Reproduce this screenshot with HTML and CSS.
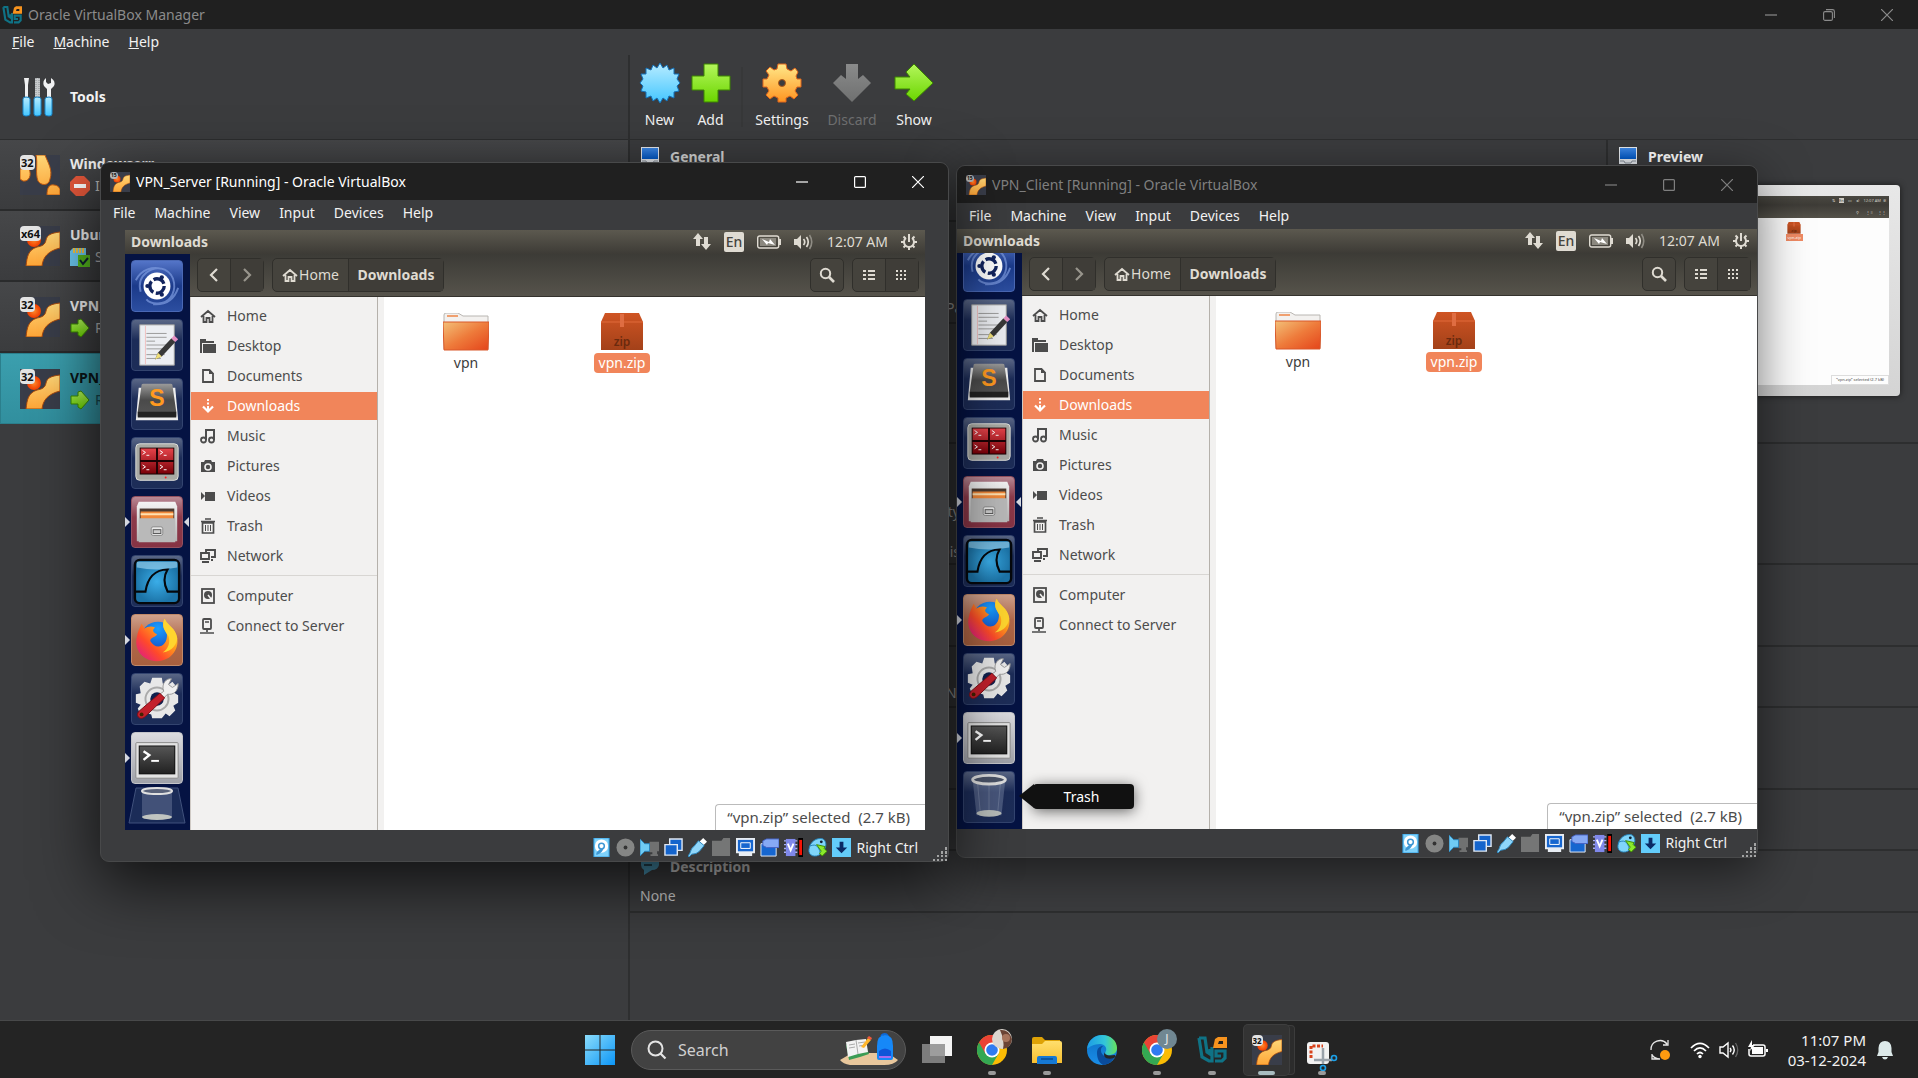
FILE: index.html
```html
<!DOCTYPE html>
<html lang="en">
<head>
<meta charset="utf-8">
<title>Oracle VirtualBox Manager</title>
<link rel="stylesheet" href="styles.css">
</head>
<body>
<svg class="defs" aria-hidden="true" width="0" height="0">
  <defs>
    <linearGradient id="gYellow" x1="0" y1="0" x2="0" y2="1"><stop offset="0" stop-color="#ffd778"/><stop offset="1" stop-color="#ffa637"/></linearGradient>
    <linearGradient id="gGreen" x1="0" y1="0" x2="0" y2="1"><stop offset="0" stop-color="#b4f65c"/><stop offset="1" stop-color="#6bd600"/></linearGradient>
    <linearGradient id="gBlue" x1="0" y1="0" x2="0" y2="1"><stop offset="0" stop-color="#b8ecff"/><stop offset="1" stop-color="#43c6ff"/></linearGradient>
    <linearGradient id="gOrange" x1="0" y1="0" x2="0" y2="1"><stop offset="0" stop-color="#ffe98a"/><stop offset="1" stop-color="#ff9420"/></linearGradient>
    <linearGradient id="gGrey" x1="0" y1="0" x2="0" y2="1"><stop offset="0" stop-color="#8a8b8b"/><stop offset="1" stop-color="#6f7070"/></linearGradient>
    <radialGradient id="gBall"><stop offset="0" stop-color="#ff8a2c"/><stop offset="1" stop-color="#f23c00"/></radialGradient>
    <linearGradient id="gScreen" x1="0" y1="0" x2="0" y2="1"><stop offset="0" stop-color="#3f8ae8"/><stop offset="1" stop-color="#0059c9"/></linearGradient>
    <linearGradient id="gFolder" x1="0" y1="0" x2="1" y2="1"><stop offset="0" stop-color="#f3c078"/><stop offset=".5" stop-color="#ee7b3b"/><stop offset="1" stop-color="#e4441a"/></linearGradient>
    <linearGradient id="gZip" x1="0" y1="0" x2="0" y2="1"><stop offset="0" stop-color="#cf5423"/><stop offset="1" stop-color="#a34119"/></linearGradient>
    <linearGradient id="gSilver" x1="0" y1="0" x2="0" y2="1"><stop offset="0" stop-color="#f4f4f4"/><stop offset="1" stop-color="#b4b4b4"/></linearGradient>
    <linearGradient id="gDark" x1="0" y1="0" x2="0" y2="1"><stop offset="0" stop-color="#9a9a9a"/><stop offset=".5" stop-color="#4a4a4a"/><stop offset="1" stop-color="#555"/></linearGradient>
    <linearGradient id="gTerm" x1="0" y1="0" x2="0" y2="1"><stop offset="0" stop-color="#555"/><stop offset="1" stop-color="#222"/></linearGradient>
    <radialGradient id="gShark"><stop offset="0" stop-color="#3aade8"/><stop offset="1" stop-color="#1c74a8"/></radialGradient>
    <linearGradient id="gFox" x1="1" y1="0" x2="0" y2="1"><stop offset="0" stop-color="#fff15a"/><stop offset=".35" stop-color="#ffa21a"/><stop offset=".65" stop-color="#ff4a2a"/><stop offset="1" stop-color="#d8109a"/></linearGradient>
    <radialGradient id="gGlobe" cx=".5" cy=".2" r=".9"><stop offset="0" stop-color="#19a0ff"/><stop offset=".5" stop-color="#1567d8"/><stop offset="1" stop-color="#4a1a8c"/></radialGradient>
    <linearGradient id="gRed" x1="0" y1="0" x2="0" y2="1"><stop offset="0" stop-color="#e4434a"/><stop offset="1" stop-color="#7a0008"/></linearGradient>
    <linearGradient id="gEdgeA" x1="0" y1="0" x2="1" y2="0"><stop offset="0" stop-color="#1c9be6"/><stop offset=".6" stop-color="#33c6d8"/><stop offset="1" stop-color="#67e35a"/></linearGradient>
    <linearGradient id="gEdgeB" x1="0" y1="0" x2="0" y2="1"><stop offset="0" stop-color="#0d6fc4"/><stop offset="1" stop-color="#1a8ee8"/></linearGradient>
    <linearGradient id="gWin" x1="0" y1="0" x2="1" y2="1"><stop offset="0" stop-color="#8bdcfb"/><stop offset="1" stop-color="#0c96f7"/></linearGradient>
    <linearGradient id="gYFolder" x1="0" y1="0" x2="0" y2="1"><stop offset="0" stop-color="#ffdf6d"/><stop offset="1" stop-color="#f8bf30"/></linearGradient>
  </defs>

  <symbol id="vm-art" viewBox="0 0 40 40">
    <rect width="40" height="40" fill="#393d49"/>
    <circle cx="14" cy="14" r="7" fill="url(#gBall)"/>
    <path d="M40 6C31 7 27 9 26 14C25 19 22 20 17 21C8 24 7 31 6 40H22C23 31 28 25 40 22Z" fill="url(#gYellow)" stroke="#a5480c" stroke-width="1"/>
  </symbol>
  <symbol id="vm-other" viewBox="0 0 40 40">
    <rect width="40" height="40" fill="#393d49"/>
    <path d="M16 0H25C28 8 33 15 30 24C29 31 21 31 18 26C15 18 18 8 16 0ZM0 14H9C12 20 9 27 3 26L0 24ZM27 40C27 33 29 29 34 30C37 30 39 32 40 34V40Z" fill="url(#gYellow)" stroke="#c05a10"/>
  </symbol>
  <symbol id="go-arrow" viewBox="0 0 20 20"><path d="M1 6H8V2L11 1L19 10L11 19L8 17V14H1Z" fill="url(#gGreen)" stroke="#3d8c00"/></symbol>
  <symbol id="vbox" viewBox="0 0 30 30">
    <path d="M2 3H8L10 17L13 19V14M2 3L5 22L12 26H15V12" fill="none" stroke="#0f7285" stroke-width="3.200"/>
    <path d="M18 26H25L28 23V16H19V21H24" fill="none" stroke="#0f7285" stroke-width="3.200"/>
    <path d="M16 13L18 4L21 2H30V13Z" fill="#f7931e"/><path d="M22 6H26V9H21Z" fill="#202020"/>
  </symbol>
  <symbol id="monitor" viewBox="0 0 20 20"><path d="M1 1H19V18H1Z" fill="#e9edf2"/><path d="M2 2H18V13H2Z" fill="url(#gScreen)"/><path d="M2 15H6L7 17H13L14 15H18" fill="none" stroke="#8a929c"/></symbol>
  <symbol id="win-min" viewBox="0 0 12 12"><path d="M0 6H12" stroke="currentColor" stroke-width="1.2"/></symbol>
  <symbol id="win-max" viewBox="0 0 12 12"><rect x=".6" y=".6" width="10.8" height="10.8" rx="1" fill="none" stroke="currentColor" stroke-width="1.2"/></symbol>
  <symbol id="win-restore" viewBox="0 0 12 12"><rect x=".6" y="2.6" width="8.8" height="8.8" rx="1.5" fill="none" stroke="currentColor" stroke-width="1.1"/><path d="M3 .6H9.5Q11.4 .6 11.4 2.5V9" fill="none" stroke="currentColor" stroke-width="1.1"/></symbol>
  <symbol id="win-close" viewBox="0 0 12 12"><path d="M0 0L12 12M12 0L0 12" stroke="currentColor" stroke-width="1.2"/></symbol>

  <!-- Ubuntu places icons -->
  <symbol id="p-home" viewBox="0 0 16 16"><path d="M1 9L8 3L15 9M3.500 8V14H6.500V10H9.500V14H12.500V8" fill="none" stroke="currentColor" stroke-width="1.800"/></symbol>
  <symbol id="p-desktop" viewBox="0 0 16 16"><path d="M0 1H6V3H14V5H2V15H0Z" fill="currentColor"/><path d="M3 6H16V15H3Z" fill="currentColor"/></symbol>
  <symbol id="p-doc" viewBox="0 0 16 16"><path d="M3 2H9.500L13 5.500V14H3Z" fill="none" stroke="currentColor" stroke-width="1.800"/><path d="M9 1V6H14" fill="currentColor"/></symbol>
  <symbol id="p-down" viewBox="0 0 16 16"><path d="M8 1V3M8 4.500V6.500M8 8V12" stroke="currentColor" stroke-width="2"/><path d="M3 8.500L8 13.500L13 8.500" fill="none" stroke="currentColor" stroke-width="2.200"/></symbol>
  <symbol id="p-music" viewBox="0 0 16 16"><path d="M6 12V2H14V12" fill="none" stroke="currentColor" stroke-width="2"/><circle cx="3.500" cy="12" r="2.500" fill="none" stroke="currentColor" stroke-width="1.800"/><circle cx="11.500" cy="12" r="2.500" fill="none" stroke="currentColor" stroke-width="1.800"/></symbol>
  <symbol id="p-pic" viewBox="0 0 16 16"><path d="M1 4H4L5 2H11L12 4H15V14H1Z" fill="currentColor"/><circle cx="8" cy="9" r="3" fill="none" stroke="#f2f1f0" stroke-width="1.600"/></symbol>
  <symbol id="p-video" viewBox="0 0 16 16"><path d="M5 4H15V13H5ZM1 4L5 8L1 12Z" fill="currentColor"/></symbol>
  <symbol id="p-trash" viewBox="0 0 16 16"><path d="M1 3.500H15M5 1H11M2.500 5H13.500V15H2.500Z" fill="none" stroke="currentColor" stroke-width="1.700"/><path d="M5.500 7V13M8 7V13M10.500 7V13" stroke="currentColor"/></symbol>
  <symbol id="p-net" viewBox="0 0 16 16"><path d="M6 4V2H15V9H11M1 5H9V11H1ZM2 14H9M11 12H13" fill="none" stroke="currentColor" stroke-width="1.900"/></symbol>
  <symbol id="p-comp" viewBox="0 0 16 16"><rect x="2" y="1" width="12" height="14" fill="none" stroke="currentColor" stroke-width="1.800"/><circle cx="8" cy="7" r="4" fill="currentColor"/><path d="M8 7L12 12" stroke="#f2f1f0" stroke-width="1.500"/></symbol>
  <symbol id="p-srv" viewBox="0 0 16 16"><rect x="3" y="1" width="8" height="10" rx="1" fill="none" stroke="currentColor" stroke-width="1.800"/><path d="M5 4H9M7 11V14M0 15H14" stroke="currentColor" stroke-width="1.700"/></symbol>

  <symbol id="i-net" viewBox="0 0 18 18"><path d="M5 0L10 6H7V13H3V6H0ZM13 17L8 11H11V4H15V11H18Z" fill="#dfdbd2"/></symbol>
  <symbol id="i-bat" viewBox="0 0 24 14"><rect x=".7" y="1" width="21" height="12" rx="2" fill="none" stroke="#dfdbd2" stroke-width="1.400"/><rect x="3" y="3" width="16" height="8" fill="#8b887f"/><path d="M22 4H24V10H22" fill="#dfdbd2"/><path d="M5 4L12 7L13 4L18 10L11 8L10 10Z" fill="#fff"/></symbol>
  <symbol id="i-snd" viewBox="0 0 20 16"><path d="M0 5H3L7 1V15L3 11H0Z" fill="#dfdbd2"/><path d="M9.500 5Q12 8 9.500 11M12.500 3Q16 8 12.500 13" fill="none" stroke="#dfdbd2" stroke-width="1.700"/><path d="M15.500 1Q20 8 15.500 15" fill="none" stroke="#908d85" stroke-width="1.600"/></symbol>
  <symbol id="i-gear" viewBox="0 0 16 16"><path d="M5 4A5 5 0 1 0 11 4M8 0V8" fill="none" stroke="#dfdbd2" stroke-width="2"/><path d="M0 8H3M13 8H16M2.500 2.500L4.500 4.500M13.500 2.500L11.500 4.500M2.500 13.500L4.500 11.500M13.500 13.500L11.500 11.500M8 13V16" stroke="#dfdbd2" stroke-width="2"/></symbol>
  <symbol id="t-prev" viewBox="0 0 12 14"><path d="M9 1L3 7L9 13" fill="none" stroke="currentColor" stroke-width="2.200"/></symbol>
  <symbol id="t-next" viewBox="0 0 12 14"><path d="M3 1L9 7L3 13" fill="none" stroke="currentColor" stroke-width="2.200"/></symbol>
  <symbol id="t-find" viewBox="0 0 16 16"><circle cx="6.500" cy="6.500" r="4.700" fill="none" stroke="currentColor" stroke-width="2"/><path d="M10 10L15 15" stroke="currentColor" stroke-width="2.600"/></symbol>
  <symbol id="t-list" viewBox="0 0 12 12"><path d="M0 2H3M0 6H3M0 10H3M5 2H12M5 6H12M5 10H12" stroke="currentColor" stroke-width="2"/></symbol>
  <symbol id="t-grid" viewBox="0 0 12 12"><path d="M0 2H12M0 6H12M0 10H12" stroke="currentColor" stroke-width="2" stroke-dasharray="2 2"/></symbol>

  <!-- Launcher tiles -->
  <symbol id="l-dash" viewBox="0 0 52 52"><path d="M9 32C4 14 22 4 34 9C46 15 46 30 40 38C34 46 20 46 15 40M4 20C10 8 22 6 30 8M22 45C36 46 44 40 48 28" fill="none" stroke="#7d9be0" stroke-width="2" opacity=".7"/><circle cx="26" cy="26" r="14" fill="#fff"/><circle cx="26" cy="26" r="7.500" fill="none" stroke="#12245e" stroke-width="3.500" stroke-dasharray="13 2.700"/><circle cx="16" cy="26" r="2.200" fill="#12245e"/><circle cx="31" cy="17" r="2.200" fill="#12245e"/><circle cx="31" cy="35" r="2.200" fill="#12245e"/></symbol>
  <symbol id="l-edit" viewBox="0 0 52 52"><path d="M8 5H44V47H8Z" fill="#eceef2" stroke="#999"/><path d="M14 6V46" stroke="#efc0c0"/><path d="M15 14H36M15 18H36M15 22H24M15 26H36M15 30H32M15 36H34M15 40H30" stroke="#9a9a9a"/><path d="M27 34L41 19L45 23L31 38L24 41Z" fill="#383838"/><path d="M27 34L31 38L24 41Z" fill="#f0e07a"/><path d="M41 19L44 16L48 20L45 23Z" fill="#e58fc4"/></symbol>
  <symbol id="l-subl" viewBox="0 0 52 52"><path d="M7 9H45L48 43H4Z" fill="#eee"/><path d="M10 6Q10 5 12 5H40Q42 5 42 6L46 34V39H6V34Z" fill="url(#gDark)"/><path d="M6 34H46V40H6Z" fill="#222"/><text x="26" y="28" text-anchor="middle" class="subl-mark">S</text></symbol>
  <symbol id="l-term4" viewBox="0 0 52 52"><rect x="4" y="6" width="44" height="38" rx="4" fill="#a9aaa4" stroke="#e0e0dc"/><rect x="8" y="10" width="36" height="28" fill="#1c0204"/><path d="M9 11H25V23H9ZM27 11H43V23H27ZM9 25H25V37H9ZM27 25H43V37H27Z" fill="url(#gRed)"/><path d="M11 13L14 15L11 17M15 18H18M29 13L32 15L29 17M33 18H36M11 28L14 30L11 32M15 33H18M29 28L32 30L29 32M33 33H36" fill="none" stroke="#fff"/><circle cx="35" cy="41" r="1" fill="#f22"/></symbol>
  <symbol id="l-files" viewBox="0 0 52 52"><path d="M7 5H45L47 10V46H5V10Z" fill="url(#gSilver)"/><rect x="8" y="12" width="36" height="12" fill="#4b3a30"/><path d="M9 15H43V23H9Z" fill="#f0883a"/><path d="M9 18H43" stroke="#ffe0b0" stroke-width="2"/><path d="M7 22H45V47H7Z" fill="#b9b9b9"/><rect x="20" y="31" width="12" height="9" rx="2" fill="#e8e8e8" stroke="#888"/><rect x="22" y="34" width="8" height="4" fill="#ccc" stroke="#555"/></symbol>
  <symbol id="l-shark" viewBox="0 0 52 52"><rect x="3" y="4" width="46" height="45" rx="5" fill="url(#gShark)" stroke="#05080c" stroke-width="2.500"/><path d="M5 6H47V12Q26 16 5 12Z" fill="#a5dcf6" opacity=".6"/><path d="M3 37H14C16 24 23 14 37 14C32 22 34 31 37 37H49" fill="none" stroke="#05080c" stroke-width="2.200"/></symbol>
  <symbol id="l-fox" viewBox="0 0 52 52"><circle cx="27" cy="25" r="18" fill="url(#gGlobe)"/><path d="M34 4C36 10 43 12 46 20C51 34 41 48 26 48C11 48 2 36 5 23C6 17 8 13 10 9L13 14C16 12 20 11 24 13C22 15 20 17 26 20C25 23 19 23 19 27C22 32 26 34 31 32C36 29 37 23 36 18C32 15 31 9 34 4Z" fill="url(#gFox)"/><path d="M34 4C31 10 33 16 38 22C40 28 38 35 32 39C42 38 47 30 47 24C45 13 36 11 34 4Z" fill="#ffd52e"/></symbol>
  <symbol id="l-sys" viewBox="0 0 52 52"><path d="M21 4H31L32 10L37 12L42 8L47 14L43 19L48 22V30L43 33L45 38L39 44L35 41L31 46H21L20 42L14 40L9 43L6 36L9 32L4 30V21L9 20L8 13L13 8L19 10Z" fill="#e8e8e8"/><circle cx="26" cy="26" r="12" fill="none" stroke="#aaa" stroke-width="2"/><circle cx="26" cy="26" r="7" fill="#10204e"/><path d="M33 18C30 10 36 4 41 5L38 11L42 14L48 10C48 18 43 22 37 21L33 25L29 21Z" fill="#f0f0f0" stroke="#999"/><path d="M29 20L34 25L14 44C9 49 3 44 7 39Z" fill="#c3202c" stroke="#7c0e16"/><circle cx="10" cy="42" r="2" fill="#420"/></symbol>
  <symbol id="l-term" viewBox="0 0 52 52"><rect x="4" y="10" width="44" height="37" rx="1" fill="#e3e3e3" stroke="#888"/><rect x="7" y="13" width="38" height="30" fill="#111"/><rect x="8" y="14" width="36" height="28" fill="url(#gTerm)"/><path d="M12 19L18 23L12 28" fill="none" stroke="#fff" stroke-width="2.500"/><path d="M20 29H28" stroke="#fff" stroke-width="2"/></symbol>
  <symbol id="l-trash" viewBox="0 0 52 52"><path d="M9 8H43L39 45H13Z" fill="#9aa6bf" opacity=".35"/><path d="M14 10L17 43M38 10L35 43M26 12V42" stroke="#a9b4c8" opacity=".3"/><ellipse cx="26" cy="43" rx="13" ry="3.500" fill="#b9bebb"/><ellipse cx="26" cy="8" rx="17" ry="4.500" fill="#4a5368" stroke="#dedede" stroke-width="3"/></symbol>
  <symbol id="l-fold" viewBox="0 0 58 38"><path d="M8 1H50L57 36H1Z" fill="#1b2c58" stroke="#40517c"/><path d="M14 5H44V30H14Z" fill="#8d99b4" opacity=".35"/><ellipse cx="29" cy="30" rx="15" ry="3" fill="#c0c4c0"/><ellipse cx="29" cy="4" rx="15" ry="3" fill="#59627a" stroke="#e0e0e0" stroke-width="2"/></symbol>

  <symbol id="f-folder" viewBox="0 0 46 38"><path d="M1 36V2Q1 0 3 0H15L20 3H45V36Z" fill="#f3f1ef" stroke="#b9b6b2"/><path d="M4 3H15" stroke="#f0a070" stroke-width="2"/><path d="M0 9H46L45 37H1Z" fill="url(#gFolder)" stroke="#d9582a"/></symbol>
  <symbol id="f-zip" viewBox="0 0 42 38"><path d="M4 0H38L42 9V37H0V9Z" fill="url(#gZip)"/><path d="M0 9H42" stroke="#e06a3a"/><path d="M19 1H23V14H19Z" fill="#df6d42"/><text x="21" y="33" text-anchor="middle" class="zip-mark">zip</text></symbol>

  <!-- Virtual machine status indicators -->
  <symbol id="s-hdd" viewBox="0 0 20 20"><path d="M2 0H18V20H2Z" fill="#7fd2fb" stroke="#2c9be0"/><circle cx="10" cy="8.500" r="7" fill="#fff"/><circle cx="10" cy="8.500" r="3" fill="none" stroke="#3f97d4" stroke-width="1.600"/><path d="M12 10Q12 15 5 18Q3 16 8 12" fill="#3f97d4"/></symbol>
  <symbol id="s-cd" viewBox="0 0 20 20"><circle cx="10" cy="10" r="9.500" fill="#858685"/><circle cx="10" cy="10" r="2" fill="#333"/></symbol>
  <symbol id="s-snd" viewBox="0 0 20 20"><path d="M10 4H20V14H18V17H19V19H11V17H13V15H10Z" fill="#707171"/><path d="M0 1L5 6H10V14H5L0 19Z" fill="#6fccf5" stroke="#2b86bd"/></symbol>
  <symbol id="s-net" viewBox="0 0 20 20"><path d="M6 1H19V13H6Z" fill="#1464cc" stroke="#dfe7f2" stroke-width="1.500"/><path d="M1 7H14V18H1Z" fill="#1464cc" stroke="#dfe7f2" stroke-width="1.500"/></symbol>
  <symbol id="s-usb" viewBox="0 0 20 20"><path d="M12 4L16 0L20 4L16 8Z" fill="#fff"/><path d="M7 8L11 3L17 8L12 14Q9 17 4 17L1 20L0 19L2 16Q3 11 7 8Z" fill="#8fd6fa" stroke="#2b86bd"/></symbol>
  <symbol id="s-dir" viewBox="0 0 20 20"><path d="M0 3H10L12 0H19V19H0Z" fill="#757676"/></symbol>
  <symbol id="s-disp" viewBox="0 0 20 20"><path d="M0 0H20V16H17V19H3V16H0Z" fill="#e8edf3"/><path d="M2 2H18V14H2Z" fill="#1666cf"/><path d="M5 5H15V11H5Z" fill="#1666cf" stroke="#fff"/></symbol>
  <symbol id="s-rec" viewBox="0 0 20 20"><path d="M1 6H17V19H1Z" fill="#1666cf" stroke="#e8edf3"/><path d="M7 1H20V10H7L3 8V3Z" fill="#86a9f4" stroke="#4762c4"/></symbol>
  <symbol id="s-cpu" viewBox="0 0 20 20"><path d="M0 3H14M0 7H14M0 11H14M0 15H14" stroke="#a9aff5" stroke-width="1.500"/><rect x="2" y="1" width="10" height="18" fill="#7f88ea"/><path d="M4 6L7 13L10 6" fill="none" stroke="#fff" stroke-width="2"/><rect x="15" y="0" width="5" height="20" fill="#000"/><rect x="16" y="2" width="3" height="16" fill="#f51405"/></symbol>
  <symbol id="s-mouse" viewBox="0 0 20 20"><path d="M1 12C2 4 9 -1 16 1C21 5 19 12 13 17C8 21 0 19 1 12Z" fill="#7fd5fa" stroke="#2583b8"/><path d="M1 9C7 6 11 7 13 16" fill="none" stroke="#2583b8"/><path d="M9 7L18 9L17 11L20 14L15 19L12 16L14 14Z" fill="#8bea2c" stroke="#3c8c00"/><circle cx="14" cy="4" r="1.500" fill="#123"/></symbol>
  <symbol id="s-key" viewBox="0 0 20 20"><rect width="20" height="20" fill="#63ccfa"/><path d="M8 4H12V10H16L10 16L4 10H8Z" fill="#0a2a66"/></symbol>
  <symbol id="s-grip" viewBox="0 0 14 14"><path d="M12 0H14V3H12ZM8 4H10V7H8ZM12 4H14V7H12ZM4 8H6V10H4ZM8 8H10V10H8ZM12 8H14V10H12ZM0 12H2V14H0ZM4 12H6V14H4ZM8 12H10V14H8ZM12 12H14V14H12Z" fill="#a3a4a4"/></symbol>

  <symbol id="chrome" viewBox="0 0 30 30"><circle cx="15" cy="15" r="15" fill="#fbbc04"/><path d="M2 7.500A15 15 0 0 0 15 30L21.500 18.700L15 15V7.500Z" fill="#34a853"/><path d="M2 7.500A15 15 0 0 1 28 7.500H15L8.500 18.700Z" fill="#ea4335"/><circle cx="15" cy="15" r="7.500" fill="#fff"/><circle cx="15" cy="15" r="5.800" fill="#2f7bf0"/></symbol>
</svg>

<main class="desktop">
  <section class="manager" aria-label="Oracle VirtualBox Manager">
    <header class="manager-title">
      <svg class="ic20"><use href="#vbox"/></svg>
      <h1>Oracle VirtualBox Manager</h1>
      <div class="controls">
        <button aria-label="Minimize"><svg><use href="#win-min"/></svg></button>
        <button aria-label="Restore"><svg><use href="#win-restore"/></svg></button>
        <button aria-label="Close"><svg><use href="#win-close"/></svg></button>
      </div>
    </header>
    <nav class="menubar"><button><u>F</u>ile</button><button><u>M</u>achine</button><button><u>H</u>elp</button></nav>
    <div class="manager-body">
      <aside class="machines">
        <button class="tools">
          <svg class="ic40" viewBox="0 0 40 40"><path d="M4 1H9L8 8V20H5V8Z" fill="#f0f1f2"/><path d="M15 1H20V20H15Z" fill="#c8cbcd"/><path d="M16 1V20M19 1V20" stroke="#8b8f92" stroke-dasharray="1 1"/><path d="M26 1V5L28 7L31 6V1Q36 4 34 9L31 12V20H27V12L24 9Q22 4 26 1Z" fill="#f0f1f2"/><path d="M3 22Q3 20 6 20Q10 20 10 22V37Q10 39 6 39Q3 39 3 37ZM14 22Q14 20 17 20Q21 20 21 22V37Q21 39 17 39Q14 39 14 37ZM25 22Q25 20 29 20Q32 20 32 22V37Q32 39 29 39Q25 39 25 37Z" fill="url(#gBlue)" stroke="#1784c8"/></svg>
          <b>Tools</b>
        </button>
        <button class="machine">
          <span class="os"><svg class="ic40"><use href="#vm-other"/></svg><i class="bits">32</i></span>
          <span class="who"><b>Windowserr</b><span class="state"><svg class="ic20" viewBox="0 0 20 20"><path d="M6 0H14L20 6V14L14 20H6L0 14V6Z" fill="#e4573a"/><path d="M4 8H16V12H4Z" fill="#fff"/></svg>Inaccessible</span></span>
        </button>
        <button class="machine">
          <span class="os"><svg class="ic40"><use href="#vm-art"/></svg><i class="bits">x64</i></span>
          <span class="who"><b>Ubuntu</b><span class="state"><svg class="ic20" viewBox="0 0 20 20"><path d="M0 4L3 1H16V19H0Z" fill="#6cc9f2"/><path d="M4 1V6M7 1V6M10 1V6M13 1V6" stroke="#f6c544" stroke-width="2"/><path d="M8 8H20V20H8Z" fill="#55b81e"/><path d="M10 13L13 17L18 11" fill="none" stroke="#123" stroke-width="2"/></svg>Saved</span></span>
        </button>
        <button class="machine">
          <span class="os"><svg class="ic40"><use href="#vm-art"/></svg><i class="bits">32</i></span>
          <span class="who"><b>VPN_Client</b><span class="state"><svg class="ic20"><use href="#go-arrow"/></svg>Running</span></span>
        </button>
        <button class="machine selected">
          <span class="os"><svg class="ic40"><use href="#vm-art"/></svg><i class="bits">32</i></span>
          <span class="who"><b>VPN_Server</b><span class="state"><svg class="ic20"><use href="#go-arrow"/></svg>Running</span></span>
        </button>
      </aside>
      <section class="work">
        <div class="actions">
          <button class="action"><svg class="ic40" viewBox="0 0 40 40"><path d="M20 0L23 5L27 2L29 7L34 5L34 11L39 11L37 16L40 20L37 23L39 28L34 29L34 35L29 33L27 38L23 35L20 40L17 35L13 38L11 33L6 35L6 29L1 28L3 23L0 20L3 16L1 11L6 11L6 5L11 7L13 2L17 5Z" fill="url(#gBlue)" stroke="#1470b8"/></svg>New</button>
          <button class="action"><svg class="ic40" viewBox="0 0 40 40"><path d="M13 1H27V13H39V27H27V39H13V27H1V13H13Z" fill="url(#gGreen)" stroke="#3c8600"/></svg>Add</button>
          <span class="action-sep"></span>
          <button class="action wide"><svg class="ic40" viewBox="0 0 40 40"><path d="M16 1H24L25 6L29 8L33 5L36 9L34 13L35 16H39V24H35L33 28L36 32L32 36L28 33L24 35V39H16V35L12 33L8 36L4 32L7 28L5 24H1V16H5L7 12L4 8L8 4L12 7L15 6Z" fill="url(#gOrange)" stroke="#e0661c"/><circle cx="20" cy="20" r="3.500" fill="#3b3c3e" stroke="#b35a14"/></svg>Settings</button>
          <button class="action wide" disabled><svg class="ic40" viewBox="0 0 40 40"><path d="M14 1H26V16L31 12L39 20L20 39L1 20L9 12L14 16Z" fill="url(#gGrey)"/></svg>Discard</button>
          <button class="action show"><svg class="ic40" viewBox="0 0 40 40"><path d="M1 14H16L12 9L20 1L39 20L20 38L12 31L16 26H1Z" fill="url(#gGreen)" stroke="#3c8600"/></svg>Show</button>
        </div>
        <div class="details">
          <section class="d-general"><h2><svg class="ic20"><use href="#monitor"/></svg>General</h2></section>
          <section class="d-preview">
            <h2><svg class="ic20"><use href="#monitor"/></svg>Preview</h2>
            <div class="thumb"><div class="thumb-screen">
              <div class="thumb-bar"><span class="thumb-row">⇅ &nbsp;&nbsp; <i>En</i> &nbsp;&nbsp; ▭ &nbsp;&nbsp; ◂) &nbsp;&nbsp; 12:07 AM &nbsp;✲</span><span class="thumb-row">⚲ &nbsp; &nbsp; &nbsp; ⋮≡ &nbsp; &nbsp; ⋮⋮</span></div>
              <div class="thumb-file"><svg><use href="#f-zip"/></svg><i>vpn.zip</i></div>
              <span class="thumb-status">“vpn.zip” selected (2.7 kB)</span>
            </div></div>
          </section>
          <section class="d-system"><p class="late">Paravirtualization</p></section>
          <section class="d-display"></section>
          <section class="d-storage"><p class="until">Empty</p><p class="until">Virtual Dis</p></section>
          <section class="d-audio"></section>
          <section class="d-network"><p class="late">NAT</p></section>
          <section class="d-usb"></section>
          <section class="d-shared"></section>
          <section class="d-desc"><h2><svg class="ic20" viewBox="0 0 20 20"><path d="M1 1H19V9Q18 14 12 14L4 19V14Q1 12 1 9Z" fill="#4a98b8"/><path d="M4 5H16M4 9H12" stroke="#1b2c36" stroke-width="1.500"/></svg>Description</h2><p>None</p></section>
        </div>
      </section>
    </div>
  </section>

  <section class="vm vm-client" aria-label="VPN_Client">
    <header class="vm-title inactive">
      <span class="os mini"><svg class="ic20"><use href="#vm-art"/></svg><i class="bits">15</i></span>
      <h2>VPN_Client [Running] - Oracle VirtualBox</h2>
      <div class="controls">
        <button aria-label="Minimize"><svg><use href="#win-min"/></svg></button>
        <button aria-label="Maximize"><svg><use href="#win-max"/></svg></button>
        <button aria-label="Close"><svg><use href="#win-close"/></svg></button>
      </div>
    </header>
    <nav class="menubar"><button>File</button><button>Machine</button><button>View</button><button>Input</button><button>Devices</button><button>Help</button></nav>
    <div class="guest">
      <div class="panel"><b>Downloads</b>
        <svg class="ic18"><use href="#i-net"/></svg><span class="lang">En</span><svg class="i-bat"><use href="#i-bat"/></svg><svg class="ic20"><use href="#i-snd"/></svg><time>12:07 AM</time><svg class="ic16"><use href="#i-gear"/></svg>
      </div>
      <nav class="launcher scrolled">
        <button class="tile dash" aria-label="Dash"><svg><use href="#l-dash"/></svg></button>
        <button class="tile" aria-label="Text Editor"><svg><use href="#l-edit"/></svg></button>
        <button class="tile" aria-label="Sublime Text"><svg><use href="#l-subl"/></svg></button>
        <button class="tile" aria-label="Terminator"><svg><use href="#l-term4"/></svg></button>
        <button class="tile rose open focus" aria-label="Files"><svg><use href="#l-files"/></svg></button>
        <button class="tile" aria-label="Wireshark"><svg><use href="#l-shark"/></svg></button>
        <button class="tile copper open" aria-label="Firefox"><svg><use href="#l-fox"/></svg></button>
        <button class="tile" aria-label="System Settings"><svg><use href="#l-sys"/></svg></button>
        <button class="tile pale open" aria-label="Terminal"><svg><use href="#l-term"/></svg></button>
        <button class="tile" aria-label="Trash"><svg><use href="#l-trash"/></svg></button>
      </nav>
      <div class="files">
        <div class="filebar">
          <div class="group"><button aria-label="Back"><svg class="chev"><use href="#t-prev"/></svg></button><button class="dim" aria-label="Forward"><svg class="chev"><use href="#t-next"/></svg></button></div>
          <div class="group path"><button><svg class="ic16"><use href="#p-home"/></svg>Home</button><button class="on"><b>Downloads</b></button></div>
          <div class="group find"><button aria-label="Search"><svg class="ic16"><use href="#t-find"/></svg></button></div>
          <div class="group"><button aria-label="List view"><svg class="ic12"><use href="#t-list"/></svg></button><button class="on" aria-label="Grid view"><svg class="ic12"><use href="#t-grid"/></svg></button></div>
        </div>
        <div class="filemain">
          <nav class="places">
            <a href="#home"><svg><use href="#p-home"/></svg>Home</a>
            <a href="#desktop"><svg><use href="#p-desktop"/></svg>Desktop</a>
            <a href="#documents"><svg><use href="#p-doc"/></svg>Documents</a>
            <a href="#downloads" class="here"><svg><use href="#p-down"/></svg>Downloads</a>
            <a href="#music"><svg><use href="#p-music"/></svg>Music</a>
            <a href="#pictures"><svg><use href="#p-pic"/></svg>Pictures</a>
            <a href="#videos"><svg><use href="#p-video"/></svg>Videos</a>
            <a href="#trash"><svg><use href="#p-trash"/></svg>Trash</a>
            <a href="#network"><svg><use href="#p-net"/></svg>Network</a>
            <hr>
            <a href="#computer"><svg><use href="#p-comp"/></svg>Computer</a>
            <a href="#connect"><svg><use href="#p-srv"/></svg>Connect to Server</a>
          </nav>
          <div class="view">
            <figure><svg class="f-folder"><use href="#f-folder"/></svg><figcaption>vpn</figcaption></figure>
            <figure class="picked"><svg class="f-zip"><use href="#f-zip"/></svg><figcaption>vpn.zip</figcaption></figure>
            <p class="selection">“vpn.zip” selected&nbsp; (2.7 kB)</p>
          </div>
        </div>
      </div>
      <div class="tip" role="tooltip">Trash</div>
    </div>
    <footer class="vm-status">
      <svg><use href="#s-hdd"/></svg><svg><use href="#s-cd"/></svg><svg><use href="#s-snd"/></svg><svg><use href="#s-net"/></svg><svg><use href="#s-usb"/></svg><svg><use href="#s-dir"/></svg><svg><use href="#s-disp"/></svg><svg><use href="#s-rec"/></svg><svg><use href="#s-cpu"/></svg><svg><use href="#s-mouse"/></svg><svg><use href="#s-key"/></svg><span>Right Ctrl</span>
      <svg class="grip"><use href="#s-grip"/></svg>
    </footer>
  </section>

  <section class="vm vm-server" aria-label="VPN_Server">
    <header class="vm-title">
      <span class="os mini"><svg class="ic20"><use href="#vm-art"/></svg><i class="bits">15</i></span>
      <h2>VPN_Server [Running] - Oracle VirtualBox</h2>
      <div class="controls">
        <button aria-label="Minimize"><svg><use href="#win-min"/></svg></button>
        <button aria-label="Maximize"><svg><use href="#win-max"/></svg></button>
        <button aria-label="Close"><svg><use href="#win-close"/></svg></button>
      </div>
    </header>
    <nav class="menubar"><button>File</button><button>Machine</button><button>View</button><button>Input</button><button>Devices</button><button>Help</button></nav>
    <div class="guest">
      <div class="panel"><b>Downloads</b>
        <svg class="ic18"><use href="#i-net"/></svg><span class="lang">En</span><svg class="i-bat"><use href="#i-bat"/></svg><svg class="ic20"><use href="#i-snd"/></svg><time>12:07 AM</time><svg class="ic16"><use href="#i-gear"/></svg>
      </div>
      <nav class="launcher">
        <button class="tile dash" aria-label="Dash"><svg><use href="#l-dash"/></svg></button>
        <button class="tile" aria-label="Text Editor"><svg><use href="#l-edit"/></svg></button>
        <button class="tile" aria-label="Sublime Text"><svg><use href="#l-subl"/></svg></button>
        <button class="tile" aria-label="Terminator"><svg><use href="#l-term4"/></svg></button>
        <button class="tile rose open focus" aria-label="Files"><svg><use href="#l-files"/></svg></button>
        <button class="tile" aria-label="Wireshark"><svg><use href="#l-shark"/></svg></button>
        <button class="tile copper open" aria-label="Firefox"><svg><use href="#l-fox"/></svg></button>
        <button class="tile" aria-label="System Settings"><svg><use href="#l-sys"/></svg></button>
        <button class="tile pale open" aria-label="Terminal"><svg><use href="#l-term"/></svg></button>
        <button class="folded" aria-label="Trash"><svg><use href="#l-fold"/></svg></button>
      </nav>
      <div class="files">
        <div class="filebar">
          <div class="group"><button aria-label="Back"><svg class="chev"><use href="#t-prev"/></svg></button><button class="dim" aria-label="Forward"><svg class="chev"><use href="#t-next"/></svg></button></div>
          <div class="group path"><button><svg class="ic16"><use href="#p-home"/></svg>Home</button><button class="on"><b>Downloads</b></button></div>
          <div class="group find"><button aria-label="Search"><svg class="ic16"><use href="#t-find"/></svg></button></div>
          <div class="group"><button aria-label="List view"><svg class="ic12"><use href="#t-list"/></svg></button><button class="on" aria-label="Grid view"><svg class="ic12"><use href="#t-grid"/></svg></button></div>
        </div>
        <div class="filemain">
          <nav class="places">
            <a href="#home"><svg><use href="#p-home"/></svg>Home</a>
            <a href="#desktop"><svg><use href="#p-desktop"/></svg>Desktop</a>
            <a href="#documents"><svg><use href="#p-doc"/></svg>Documents</a>
            <a href="#downloads" class="here"><svg><use href="#p-down"/></svg>Downloads</a>
            <a href="#music"><svg><use href="#p-music"/></svg>Music</a>
            <a href="#pictures"><svg><use href="#p-pic"/></svg>Pictures</a>
            <a href="#videos"><svg><use href="#p-video"/></svg>Videos</a>
            <a href="#trash"><svg><use href="#p-trash"/></svg>Trash</a>
            <a href="#network"><svg><use href="#p-net"/></svg>Network</a>
            <hr>
            <a href="#computer"><svg><use href="#p-comp"/></svg>Computer</a>
            <a href="#connect"><svg><use href="#p-srv"/></svg>Connect to Server</a>
          </nav>
          <div class="view">
            <figure><svg class="f-folder"><use href="#f-folder"/></svg><figcaption>vpn</figcaption></figure>
            <figure class="picked"><svg class="f-zip"><use href="#f-zip"/></svg><figcaption>vpn.zip</figcaption></figure>
            <p class="selection">“vpn.zip” selected&nbsp; (2.7 kB)</p>
          </div>
        </div>
      </div>
    </div>
    <footer class="vm-status">
      <svg><use href="#s-hdd"/></svg><svg><use href="#s-cd"/></svg><svg><use href="#s-snd"/></svg><svg><use href="#s-net"/></svg><svg><use href="#s-usb"/></svg><svg><use href="#s-dir"/></svg><svg><use href="#s-disp"/></svg><svg><use href="#s-rec"/></svg><svg><use href="#s-cpu"/></svg><svg><use href="#s-mouse"/></svg><svg><use href="#s-key"/></svg><span>Right Ctrl</span>
      <svg class="grip"><use href="#s-grip"/></svg>
    </footer>
  </section>
</main>

<footer class="taskbar">
  <div class="dock">
    <button class="app" aria-label="Start"><svg class="ic30" viewBox="0 0 30 30"><path d="M0 0H14.500V14.500H0ZM15.500 0H30V14.500H15.500ZM0 15.500H14.500V30H0ZM15.500 15.500H30V30H15.500Z" fill="url(#gWin)"/></svg></button>
    <label class="search">
      <svg class="ic20" viewBox="0 0 20 20"><circle cx="8.500" cy="8.500" r="7" fill="none" stroke="#e4e4e4" stroke-width="2"/><path d="M13.500 13.500L18.500 18.500" stroke="#e4e4e4" stroke-width="2.200"/></svg>
      <input type="search" placeholder="Search" aria-label="Search">
      <svg class="school" viewBox="0 0 58 32"><path d="M0 26L12 19H48L58 26Q54 31 44 31H10Q3 30 0 26Z" fill="#e9c79c"/><path d="M6 11L14 7L24 6L29 20L20 23L9 26Z" fill="#3b9c54"/><path d="M6 8L16 6L26 5L28 18L18 20L8 23Z" fill="#f3f3f3"/><path d="M16 6L18 20M9 11L15 10M9 14L15 13M18 9L25 8M19 12L26 11" stroke="#aaa" fill="none"/><path d="M21 13L28 4L31 6L24 14Z" fill="#ffb62c"/><path d="M27 4L29 2L32 4L31 6Z" fill="#f0593c"/><path d="M41 2Q45 -2 48 2" fill="none" stroke="#0d68d8" stroke-width="2"/><path d="M37 12Q37 1 45 1Q53 1 53 12V24Q53 26 51 26H39Q37 26 37 24Z" fill="#1688f8"/><path d="M39 17Q45 12 51 17V24H39Z" fill="#0f55d8"/><path d="M39 23H51" stroke="#a66cf0" stroke-width="2"/></svg>
    </label>
    <button class="app" aria-label="Task View"><svg class="ic30" viewBox="0 0 30 30"><path d="M8 1H30V21H8Z" fill="#f4f4f4"/><path d="M0 9H23V28H0Z" fill="#8d8d8d" opacity=".85"/></svg></button>
    <button class="app running" aria-label="Chrome, first profile"><svg class="ic30"><use href="#chrome"/></svg><svg class="face" viewBox="0 0 20 20"><circle cx="10" cy="10" r="10" fill="#dcd6cf"/><path d="M8 1Q17 0 20 10Q19 19 11 20Q13 12 8 1Z" fill="#6b4334"/><circle cx="14" cy="9" r="4" fill="#a8745c"/></svg></button>
    <button class="app running" aria-label="File Explorer"><svg class="ic30" viewBox="0 0 30 30"><path d="M0 4Q0 2 2 2H10L13 5H28V12H0Z" fill="#dea206"/><path d="M0 9H10L13 6H28Q30 6 30 8V28H0Z" fill="url(#gYFolder)"/><path d="M5 29V23Q5 21 7 21H23Q25 21 25 23V29Z" fill="#1679d4"/><path d="M9 24H21" stroke="#0a4c92" stroke-width="1.500"/></svg></button>
    <button class="app" aria-label="Edge"><svg class="ic30" viewBox="0 0 30 30"><circle cx="15" cy="15" r="15" fill="url(#gEdgeB)"/><path d="M0 14C1 5 8 0 15 0C24 0 30 6 30 13C30 18 26 20 22 20C18 20 17 18 19 16C20 13 18 9 13 9C7 9 2 12 0 14Z" fill="url(#gEdgeA)"/><path d="M10 18C10 13 13 11 16 11C12 14 14 21 20 22C24 23 27 22 28 21C25 28 19 30 16 30C12 28 10 23 10 18Z" fill="#0a4c9c"/><path d="M19 16C17 18 18 20 22 20.500L28 20L29 22Q24 25 19 23Q15 20 19 16Z" fill="#262626"/></svg></button>
    <button class="app running" aria-label="Chrome, profile J"><svg class="ic30"><use href="#chrome"/></svg><span class="face letter">J</span></button>
    <button class="app running" aria-label="VirtualBox"><svg class="ic30"><use href="#vbox"/></svg></button>
    <button class="app running active" aria-label="Virtual machines"><span class="os small"><svg class="ic30"><use href="#vm-art"/></svg><i class="bits">32</i></span></button>
    <button class="app running" aria-label="Snipping Tool"><svg class="snip" viewBox="0 0 30 30"><rect width="22" height="22" rx="3" fill="#f2f2f2"/><path d="M4 16V4H16" fill="none" stroke="#d8431c" stroke-width="3" stroke-dasharray="3 1.500"/><path d="M16 6V22M7 18H25" stroke="#9aa2aa" stroke-width="2.500"/><circle cx="27" cy="16" r="2.500" fill="none" stroke="#1ba0e8" stroke-width="1.600"/><circle cx="16" cy="26" r="2.500" fill="none" stroke="#1ba0e8" stroke-width="1.600"/></svg></button>
  </div>
  <div class="tray">
    <svg class="sync" viewBox="0 0 20 20"><path d="M1 10A9 9 0 0 1 17 4M18 0V5H13M8 19H2V14M2 15Q5 19 10 19" fill="none" stroke="#e8e8e8" stroke-width="1.300"/><circle cx="15" cy="15" r="5" fill="#ff9a10"/></svg>
    <svg class="ic20" viewBox="0 0 20 20"><path d="M1 8Q10 -1 19 8M4 11Q10 5 16 11M7 14Q10 11 13 14" fill="none" stroke="#fff" stroke-width="1.700"/><circle cx="10" cy="16.500" r="1.700" fill="#fff"/></svg>
    <svg class="ic20" viewBox="0 0 20 20"><path d="M1 7H4L9 3V17L4 13H1Z" fill="none" stroke="#fff" stroke-width="1.400"/><path d="M11 8Q13 10 11 12M13.500 5.500Q17 10 13.500 14.500" fill="none" stroke="#fff" stroke-width="1.400"/><path d="M16.500 3Q21 10 16.500 17" fill="none" stroke="#666" stroke-width="1.300"/></svg>
    <svg class="ic20" viewBox="0 0 20 20"><path d="M5 5H15Q17 5 17 7V14Q17 16 15 16H3Q1 16 1 14V9" fill="none" stroke="#fff" stroke-width="1.500"/><rect x="4" y="7" width="11" height="7" fill="#fff"/><path d="M18 9H20V12H18Z" fill="#fff"/><path d="M4 0L0 7H3L2 11L7 5H4Z" fill="#fff"/></svg>
    <time class="clock"><span>11:07 PM</span><span>03-12-2024</span></time>
    <svg class="ic20" viewBox="0 0 20 20"><path d="M10 1Q16 1 16.500 8V12L18 16H2L3.500 12V8Q4 1 10 1ZM7 17H13Q12 19.500 10 19.500Q8 19.500 7 17Z" fill="#dce9e9"/></svg>
  </div>
</footer>
</body>
</html>
```
FILE: styles.css
```css
* { box-sizing: border-box; }

body {
  margin: 0;
  min-height: 100vh;
  display: flex;
  flex-direction: column;
  overflow: hidden;
  background: #3b3c3e;
  color: #f2f2f2;
  font: 14px/20px "Noto Sans", sans-serif;
}

h1, h2, p, figure { margin: 0; font-weight: 400; font-size: 14px; }
button { padding: 0; border: 0; background: none; color: inherit; font: inherit; }
svg { display: block; flex: none; overflow: visible; }
a { color: inherit; text-decoration: none; }

.defs { position: absolute; }
.ic12 { width: 12px; height: 12px; }
.ic16 { width: 16px; height: 16px; }
.ic18 { width: 18px; height: 18px; }
.ic20 { width: 20px; height: 20px; }
.ic30 { width: 30px; height: 30px; }
.ic40 { width: 40px; height: 40px; }

.desktop { position: relative; flex: 1; display: flex; }

/* Manager window */
.manager { flex: 1; display: flex; flex-direction: column; }
.manager-title {
  display: flex;
  align-items: center;
  gap: 6px;
  height: 29px;
  padding: 0 2px;
  background: #202020;
  color: #8b8b8b;
}
.controls { display: flex; margin-left: auto; }
.controls button { display: flex; justify-content: center; align-items: center; width: 58px; height: 28px; }
.controls svg { width: 12px; height: 12px; }

.menubar { display: flex; gap: 19px; height: 26px; padding-left: 12px; align-items: center; }

.manager-body { flex: 1; display: flex; }
.machines { width: 630px; border-right: 2px solid #2e2f30; }
.tools { display: flex; width: 100%; height: 85px; padding: 0 20px 0; gap: 10px; align-items: center; border-bottom: 1px solid #2c2d2e; text-align: left; }
.machine {
  display: flex;
  align-items: center;
  gap: 10px;
  width: 100%;
  height: 71px;
  padding: 0 20px;
  border-bottom: 2px solid #2a2b2c;
  background: linear-gradient(#464749, #3b3c3e);
  text-align: left;
}
.machine.selected { background: linear-gradient(#3b9fae, #318f9e); border: 1px solid #2b7f8c; padding-left: 19px; color: #0b1416; }
.who { display: flex; flex-direction: column; gap: 2px; }
.state { display: flex; gap: 5px; color: #b5b6b7; }
.selected .state { color: #16464e; }

.os { position: relative; }
.bits {
  position: absolute;
  left: 0;
  top: 0;
  padding: 0 1px;
  border-radius: 4px;
  background: #e4e4e4;
  color: #111;
  font: 700 11px/15px "Noto Sans", sans-serif;
}
.small .bits { font-size: 8px; line-height: 11px; }
.mini .bits { font-size: 5px; line-height: 7px; background: #b5b5b5; }

.work { flex: 1; display: flex; flex-direction: column; }
.actions { display: flex; height: 84px; padding: 8px 0 0 4px; }
.action { display: flex; flex-direction: column; align-items: center; gap: 7px; width: 51px; height: 67px; }
.action.wide { width: 70px; }
.action.show { width: 54px; }
.action svg { width: 40px; height: 40px; }
.action:disabled { color: #6f7071; }
.action-sep { width: 2px; height: 60px; margin: 4px 4px 0 5px; background: #373839; }
.details {
  display: grid;
  grid-template-columns: 1fr 312px;
  grid-template-rows: 82px 102px 120px 121px 82px 61px 82px 61px 62px;
  border-top: 1px solid #2d2e2f;
}
.details section { grid-column: 1 / -1; padding: 6px 10px; border-bottom: 2px solid #2d2e2f; }
.details .d-general, .details .d-system, .details .d-display { grid-column: 1; }
.details .d-preview { grid-column: 2; grid-row: 1 / 4; border-left: 2px solid #2d2e2f; padding-right: 18px; }
.details h2 { display: flex; gap: 10px; font-weight: 700; color: #d8d8d8; line-height: 22px; }
.details .d-preview h2 { color: #fff; }
.details .d-desc { padding-top: 5px; }
.details .d-desc h2, .details .d-desc p { color: #cfcfcf; }
.details .d-desc p { padding-top: 8px; }
.details .d-system { padding-top: 76px; }
.details .d-storage { padding-top: 56px; line-height: 24px; }
.details .d-network { padding-top: 36px; }
.late { padding-left: 306px; color: #b4b4b4; }
.until { width: 320px; height: 40px; text-align: right; color: #b4b4b4; }

.thumb { height: 211px; margin-top: 17px; margin-left: 10px; padding: 11px; border-radius: 4px; background: linear-gradient(#e8e8e8, #d4d4d4); box-shadow: 0 0 6px #1a1a1a; }
.thumb-screen { height: 100%; display: flex; flex-direction: column; align-items: flex-end; background: #fdfdfd; color: #444; font-size: 4px; line-height: 8px; }
.thumb-bar { width: 100%; height: 22px; padding: 0 3px; display: flex; flex-direction: column; align-items: flex-end; gap: 2px; background: linear-gradient(#4a4841, #3e3c37 40%, #55524a); color: #cfcbc2; line-height: 10px; }
.thumb-bar i { background: #cfcbc2; color: #444; font-style: normal; }
.thumb-file { display: flex; flex-direction: column; align-items: center; margin: 4px 86px 0 0; }
.thumb-file svg { width: 14px; height: 12px; }
.thumb-file i { padding: 0 2px; background: #f08a63; color: #fff; font-style: normal; line-height: 7px; }
.thumb-status { margin-top: auto; padding: 0 4px; border: 1px solid #ddd; }

/* Virtual machine windows */
.vm {
  position: absolute;
  display: flex;
  flex-direction: column;
  border: 1px solid #48494a;
  border-radius: 9px;
  background: #3b3c3e;
  box-shadow: 0 12px 50px rgba(0, 0, 0, .55);
}
.vm-client { left: 956px; top: 165px; width: 802px; height: 693px; }
.vm-server { left: 100px; top: 162px; width: 849px; height: 700px; box-shadow: 0 20px 64px rgba(0, 0, 0, .75); }
.vm-title { display: flex; align-items: center; gap: 6px; height: 37px; padding: 0 1px 0 9px; border-radius: 8px 8px 0 0; background: #202020; color: #fff; }
.vm-client .vm-title, .vm-client .vm-title .controls { color: #7f7f7f; }
.vm .menubar { height: 26px; }
.vm-server .menubar { height: 30px; padding-bottom: 4px; }

.guest {
  position: relative;
  display: grid;
  grid-template-columns: 65px 1fr;
  grid-template-rows: 24px 1fr;
  height: 600px;
  background: #fff;
}
.vm-server .guest { margin: 0 23px 0 24px; }
.panel { grid-column: 1 / -1; display: flex; align-items: center; gap: 13px; padding: 0 8px 0 6px; background: linear-gradient(#5c594f, #3d3b36); color: #dfdbd2; }
.panel b { margin-right: auto; }
.panel .ic20 { height: 16px; }
.i-bat { width: 24px; height: 14px; }
.lang { width: 20px; border-radius: 2px; background: #dfdbd2; color: #45433d; text-align: center; font-weight: 500; }

.launcher { display: flex; flex-direction: column; align-items: center; gap: 7px; padding: 6px 1px 0 0; overflow: hidden; background: #051343; }
.launcher.scrolled { justify-content: flex-end; padding: 0 1px 6px 0; }
.tile { position: relative; flex: none; width: 52px; height: 52px; border: 1px solid #33446f; border-radius: 4px; background: linear-gradient(#5a6786, #1c2c58 40%, #1d2d58); }
.tile svg { width: 50px; height: 50px; }
.dash { background: linear-gradient(#5475c8, #1b3a8a 50%, #2c4ea0); border-color: #4a68b4; }
.rose { background: linear-gradient(#b98a96, #8c3a4a 40%, #863344); border-color: #94505f; }
.copper { background: linear-gradient(#cfa18c, #b0674a 50%, #a8603e); border-color: #c08868; }
.pale { background: linear-gradient(#dcdce0, #9fa1a8); border-color: #c4c5ca; }
.open::before, .focus::after { content: ""; position: absolute; top: 20px; border: 5px solid transparent; }
.open::before { left: -7px; border-left-color: #d5d8e0; border-right: 0; }
.focus::after { right: -7px; border-right-color: #d5d8e0; border-left: 0; }
.folded { margin-top: -4px; }
.folded svg { width: 58px; height: 38px; }
.subl-mark { font: 700 24px "Liberation Sans", sans-serif; fill: #ff9a1f; }
.zip-mark { font: 600 12px "Noto Sans", sans-serif; fill: #6a2a0e; }

.files { display: flex; flex-direction: column; min-width: 0; }
.filebar { display: flex; align-items: center; height: 43px; padding: 0 6px 0 7px; gap: 8px; border-bottom: 1px solid #34322d; background: linear-gradient(#3c3b36, #56534b); color: #dfdbd2; }
.group { display: flex; height: 34px; border: 1px solid #302f2b; border-radius: 5px; background: #45433d; }
.group button { display: flex; justify-content: center; align-items: center; width: 32px; color: #dfdbd2; }
.group button + button { border-left: 1px solid #302f2b; width: 33px; }
.group .on { background: #3f3d38; }
.group .dim { color: #98958c; background: #3f3d38; }
.chev { width: 12px; height: 14px; }
.group.path button { width: 75px; gap: 1px; }
.group.path button + button { width: 95px; }
.find { margin-left: auto; }
.filemain { flex: 1; display: flex; }
.places { display: flex; flex-direction: column; gap: 2px; width: 188px; padding: 5px 0 0; border-right: 1px solid #b5b1ab; border-left: 1px solid #cfcac5; background: #f2f1f0; color: #4c4c4c; }
.places a { display: flex; align-items: center; gap: 11px; height: 28px; padding-left: 9px; }
.places svg { width: 16px; height: 16px; }
.places .here { background: #f1855a; color: #fff; }
.places hr { width: 100%; margin: 3px 0 4px; border: 0; border-top: 1px solid #d8d6d3; }
.view { position: relative; flex: 1; display: flex; align-items: flex-start; gap: 72px; padding: 16px 0 0 40px; border-left: 6px solid #f2f1f0; color: #3c3c3c; }
figure { display: flex; flex-direction: column; align-items: center; gap: 2px; width: 84px; }
figcaption { padding: 0 5px; border-radius: 4px; }
.picked figcaption { background: #f1855a; color: #fff; }
.f-folder { width: 46px; height: 38px; }
.f-zip { width: 42px; height: 38px; }
.selection { position: absolute; right: 0; bottom: 0; padding: 2px 15px 3px 11px; border: 1px solid #bbb; border-width: 1px 0 0 1px; border-radius: 4px 0 0 0; color: #4c4c4c; font-size: 15px; }
.tip { position: absolute; left: 76px; bottom: 20px; width: 101px; height: 25px; border-radius: 4px; background: #111; color: #fff; line-height: 25px; text-align: center; text-indent: -4px; box-shadow: 0 2px 14px rgba(0, 0, 0, .6); }
.tip::before { content: ""; position: absolute; left: -14px; top: 0; border: 12px solid transparent; border-left: 0; border-right: 15px solid #111; }

.vm-status { flex: 1; display: flex; align-items: center; justify-content: flex-end; gap: 5px; padding: 0 1px 0 0; }
.vm-status svg { width: 19px; height: 19px; }
.vm-status .grip { width: 14px; height: 14px; margin-left: 10px; align-self: flex-end; }
.vm-server .vm-status { padding-top: 4px; }

/* Taskbar */
.taskbar { position: relative; display: flex; justify-content: center; height: 58px; padding-left: 3px; border-top: 1px solid #48494a; background: #242424; }
.dock { display: flex; align-items: center; gap: 10px; }
.app { position: relative; display: flex; justify-content: center; align-items: center; width: 45px; height: 50px; border-radius: 4px; }
.running::after { content: ""; position: absolute; bottom: 0; width: 8px; height: 4px; border-radius: 2px; background: #9a9a9a; }
.active { background: #333; box-shadow: 0 0 0 1px #3e3e3e, 6px 0 0 -1px #2c2c2c, 6px 0 0 #3c3c3c; }
.active::after { width: 17px; background: #a9bcc0; }
.search { display: flex; align-items: center; gap: 11px; width: 275px; height: 40px; margin: 0 -2px 0 -1px; padding: 0 7px 0 15px; border: 1px solid #5a5a5a; border-radius: 20px; background: #424242; }
.search input { flex: 1; min-width: 0; padding: 0; border: 0; outline: 0; background: none; color: #ddd; font: 16px/22px "Noto Sans", sans-serif; }
.search input::placeholder { color: #d0d0d0; opacity: 1; }
.school { width: 58px; height: 32px; }
.snip { width: 30px; height: 30px; margin-top: 14px; }
.face { position: absolute; right: 2px; top: 4px; width: 20px; height: 20px; border-radius: 50%; }
.letter { background: #708792; color: #e8e8e8; font-size: 12px; line-height: 20px; text-align: center; }
.tray { position: absolute; right: 23px; top: 0; height: 100%; display: flex; align-items: center; gap: 9px; }
.sync { width: 20px; height: 20px; margin-right: 11px; }
.clock { display: flex; flex-direction: column; width: 89px; font-size: 15px; text-align: right; }
```
